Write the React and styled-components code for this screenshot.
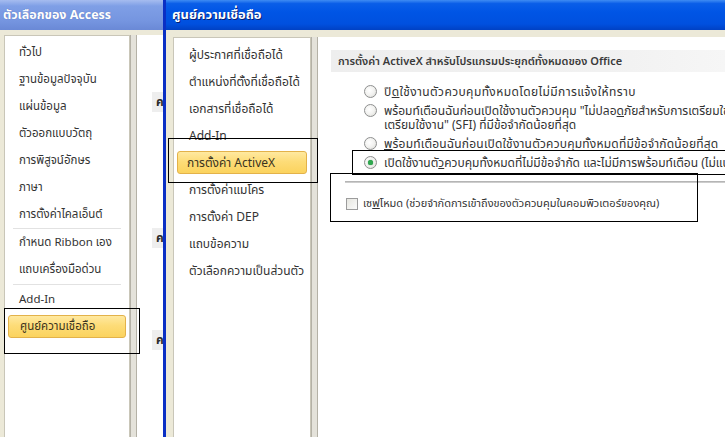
import React from 'react'
import styled, { createGlobalStyle } from 'styled-components'

const GlobalStyle = createGlobalStyle`
  html, body {
    margin: 0;
    padding: 0;
    background: #ffffff;
  }
  body {
    font-family: "Noto Sans Thai", Tahoma, "DejaVu Sans", "Liberation Sans", sans-serif;
    font-size: 11px;
    color: #2b2b2b;
  }
`;

const Desktop = styled.div`
  position: relative;
  width: 725px;
  height: 437px;
  overflow: hidden;
  background: #ffffff;
`;

/* ---------- windows ---------- */

const Window = styled.div`
  position: absolute;
  top: 0;
  left: ${({ left }) => left}px;
  width: ${({ width }) => width}px;
  height: 437px;
  display: flex;
  flex-direction: column;
  background: #ece9d8;
  border-left: ${({ active }) => (active ? '3px solid #0a2fc4' : 'none')};
  box-sizing: border-box;
`;

const TitleBar = styled.div`
  height: 30px;
  flex: none;
  display: flex;
  align-items: center;
  padding-left: ${({ active }) => (active ? 6 : 3)}px;
  background: ${({ active }) =>
    active
      ? 'linear-gradient(#3f8cf3 0%, #0a5ee8 12%, #0055e5 40%, #0050df 80%, #0041c4 100%)'
      : 'linear-gradient(#a6bcef 0%, #7f9fe6 20%, #7595e0 70%, #6a89d6 100%)'};
  color: #ffffff;
  font-weight: 700;
  font-size: ${({ active }) => (active ? 13 : 12.5)}px;
  text-shadow: ${({ active }) => (active ? '1px 1px 0 #0a1f70' : '0 0 1px #5a70b0')};
  white-space: nowrap;
`;

const Body = styled.div`
  flex: 1;
  display: flex;
  padding: ${({ pad }) => pad};
  min-height: 0;
`;

/* ---------- nav lists ---------- */

const NavPanel = styled.div`
  position: relative;
  width: ${({ width }) => width}px;
  flex: none;
  background: #ffffff;
  border: 1px solid #c9c6b8;
  border-bottom: none;
  padding-top: 3px;
  box-sizing: border-box;
  font-size: ${({ size }) => size}px;
`;

const NavItem = styled.div`
  height: 27px;
  display: flex;
  align-items: center;
  margin: 0 3px;
  padding-left: ${({ indent }) => indent}px;
  box-sizing: border-box;
  white-space: nowrap;
  overflow: hidden;
  color: #333333;
  ${({ selected }) =>
    selected &&
    `
    height: 23px;
    margin: 2px 3px;
    border: 1px solid #e3b24a;
    border-radius: 3px;
    background: linear-gradient(#ffe9a0 0%, #fddc78 45%, #fbd35e 100%);
    color: #3a3320;
  `}
`;

const NavSeparator = styled.div`
  height: 1px;
  margin: ${({ space }) => space}px 8px;
  background: #e2e2e2;
`;

const Splitter = styled.div`
  width: 7px;
  flex: none;
  background: #e4e2da;
  border-left: 1px solid #b4b1a6;
  border-right: 1px solid #b4b1a6;
  box-sizing: border-box;
`;

const ContentPanel = styled.div`
  flex: 1;
  background: #ffffff;
  min-width: 0;
  overflow: hidden;
`;

/* ---------- back window content ---------- */

const ChipColumn = styled.div`
  display: flex;
  flex-direction: column;
  padding: 57px 0 0 15px;
`;

const Chip = styled.div`
  width: 14px;
  height: 20px;
  margin-bottom: ${({ gap }) => gap}px;
  background: #eeeeee;
  font-weight: 700;
  font-size: 12px;
  line-height: 20px;
  padding-left: 4px;
  box-sizing: border-box;
  overflow: hidden;
`;

/* ---------- trust center content ---------- */

const SectionHeader = styled.div`
  margin: 13px 0 0 13px;
  height: 22px;
  display: flex;
  align-items: center;
  padding-left: 7px;
  background: linear-gradient(90deg, #eeeeee 0%, #f1f1f1 70%, #f6f6f6 100%);
  font-size: 11px;
  font-weight: 600;
  color: #3a3a3a;
  white-space: nowrap;
`;

const OptionList = styled.div`
  position: relative;
  display: flex;
  flex-direction: column;
  gap: 5px;
  padding: 13px 0 0 46px;
`;

const OptionRow = styled.div`
  display: flex;
  align-items: flex-start;
  line-height: 14px;
  white-space: nowrap;
`;

const Radio = styled.span`
  flex: none;
  width: 13px;
  height: 13px;
  margin-right: 7px;
  border-radius: 50%;
  border: 1px solid #8e8f8f;
  box-sizing: border-box;
  background: radial-gradient(circle at 40% 40%, #ffffff 0%, #f2f2f0 50%, #d8d8d2 100%);
  display: flex;
  align-items: center;
  justify-content: center;
  &::after {
    content: '';
    display: ${({ checked }) => (checked ? 'block' : 'none')};
    width: 5px;
    height: 5px;
    border-radius: 50%;
    background: #2fa84f;
    box-shadow: 0 0 1px #1a7d35;
  }
`;

const Label = styled.span`
  color: #333333;
  font-size: ${({ size }) => size || 12}px;
  letter-spacing: ${({ spread }) => spread || 0}px;
`;

const Key = styled.span`
  text-decoration: underline;
`;

const Divider = styled.div`
  margin: 11px 0 0 27px;
  height: 2px;
  background: linear-gradient(#a9a9a9, #d8d8d8);
`;

const CheckRow = styled.div`
  display: flex;
  align-items: center;
  padding: 12px 0 0 28px;
  white-space: nowrap;
`;

const CheckBox = styled.span`
  flex: none;
  width: 12px;
  height: 12px;
  margin-right: 5px;
  border: 1px solid #9c9c9c;
  box-sizing: border-box;
  background: linear-gradient(135deg, #e6e6e0, #fbfbfb);
`;

/* ---------- annotation frames drawn on top of the shot ---------- */

const Frame = styled.div`
  position: absolute;
  left: ${({ x }) => x}px;
  top: ${({ y }) => y}px;
  width: ${({ w }) => w}px;
  height: ${({ h }) => h}px;
  border: 1px solid #000000;
  box-sizing: border-box;
  pointer-events: none;
  z-index: 5;
`;

const accessItems = [
  'ทั่วไป',
  'ฐานข้อมูลปัจจุบัน',
  'แผ่นข้อมูล',
  'ตัวออกแบบวัตถุ',
  'การพิสูจน์อักษร',
  'ภาษา',
  'การตั้งค่าไคลเอ็นต์',
  '-',
  'กำหนด Ribbon เอง',
  'แถบเครื่องมือด่วน',
  '-',
  'Add-In',
]

const trustItems = [
  'ผู้ประกาศที่เชื่อถือได้',
  'ตำแหน่งที่ตั้งที่เชื่อถือได้',
  'เอกสารที่เชื่อถือได้',
  'Add-In',
  'การตั้งค่า ActiveX',
  'การตั้งค่าแมโคร',
  'การตั้งค่า DEP',
  'แถบข้อความ',
  'ตัวเลือกความเป็นส่วนตัว',
]

const App = () => {
  return (
    <Desktop>
      <GlobalStyle />

      {/* Access options, behind */}
      <Window left={0} width={200}>
        <TitleBar>ตัวเลือกของ Access</TitleBar>
        <Body pad="5px 0 0 4px">
          <NavPanel width={126} size={11.5}>
            {accessItems.map((item, i) =>
              item === '-' ? (
                <NavSeparator key={i} space={i === 7 ? 0 : 1} />
              ) : (
                <NavItem key={i} indent={11}>{item}</NavItem>
              )
            )}
            <NavItem indent={11} selected>ศูนย์ความเชื่อถือ</NavItem>
          </NavPanel>
          <Splitter />
          <ContentPanel>
            <ChipColumn>
              <Chip gap={116}>ค</Chip>
              <Chip gap={82}>ค</Chip>
              <Chip gap={0}>ค</Chip>
            </ChipColumn>
          </ContentPanel>
        </Body>
      </Window>
      <Frame x={4} y={308} w={136} h={46} />

      {/* Trust center, in front */}
      <Window left={163} width={562} active>
        <TitleBar active>ศูนย์ความเชื่อถือ</TitleBar>
        <Body pad="7px 0 0 7px">
          <NavPanel width={138} size={12}>
            {trustItems.map((item, i) => (
              <NavItem key={i} indent={i === 4 ? 9 : 12} selected={i === 4}>
                {item}
              </NavItem>
            ))}
          </NavPanel>
          <Splitter />
          <ContentPanel>
            <SectionHeader>การตั้งค่า ActiveX สำหรับโปรแกรมประยุกต์ทั้งหมดของ Office</SectionHeader>
            <OptionList>
              <OptionRow>
                <Radio />
                <Label spread={0.4}>ปิ<Key>ด</Key>ใช้งานตัวควบคุมทั้งหมดโดยไม่มีการแจ้งให้ทราบ</Label>
              </OptionRow>
              <OptionRow>
                <Radio />
                <Label>
                  พร้อมท์เตือนฉันก่อนเปิดใช้งานตัวควบคุม "ไม่ปลอ<Key>ด</Key>ภัยสำหรับการเตรียมใช้งาน
                  <br />
                  เตรียมใช้งาน" (SFI) ที่มีข้อจำกัดน้อยที่สุด
                </Label>
              </OptionRow>
              <OptionRow>
                <Radio />
                <Label spread={0.2}><Key>พ</Key>ร้อมท์เตือนฉันก่อนเปิดใช้งานตัวควบคุมทั้งหมดที่มีข้อจำกัดน้อยที่สุด</Label>
              </OptionRow>
              <OptionRow>
                <Radio checked />
                <Label>เปิดใช้งานตั<Key>ว</Key>ควบคุมทั้งหมดที่ไม่มีข้อจำกัด และไม่มีการพร้อมท์เตือน (ไม่แนะนำ)</Label>
              </OptionRow>
            </OptionList>
            <Divider />
            <CheckRow>
              <CheckBox />
              <Label size={11}>เซ<Key>ฟ</Key>โหมด (ช่วยจำกัดการเข้าถึงของตัวควบคุมในคอมพิวเตอร์ของคุณ)</Label>
            </CheckRow>
          </ContentPanel>
        </Body>
      </Window>
      <Frame x={168} y={138} w={150} h={45} />
      <Frame x={352} y={150} w={380} h={25} />
      <Frame x={330} y={173} w={368} h={49} />
    </Desktop>
  )
}

export default App
